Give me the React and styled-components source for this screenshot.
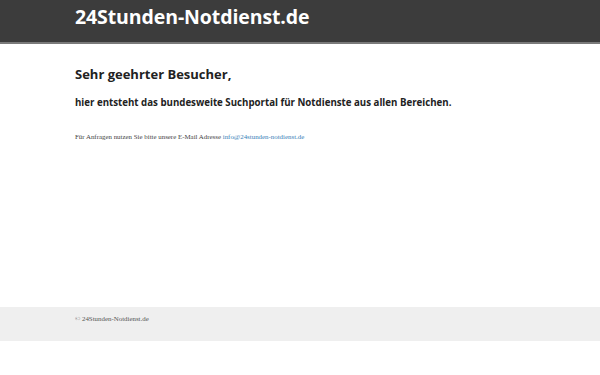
import React from "react";
import styled, { createGlobalStyle } from "styled-components";

const Global = createGlobalStyle`
  html, body { margin: 0; padding: 0; background: #fff; }
  body { font-family: "Open Sans", sans-serif; }
`;

const Header = styled.header`
  background: #3c3c3c;
  height: 42px;
  border-bottom: 2px solid #7a7a7a;
  padding: 0 75px;
  display: flex;
  align-items: center;
`;

const Title = styled.h1`
  margin: 0;
  margin-top: -9px;
  color: #fff;
  font-family: "Open Sans", sans-serif;
  font-weight: 700;
  font-size: 19.5px;
  letter-spacing: -0.1px;
`;

const Main = styled.main`
  padding: 20px 75px 0;
  height: 243px;
`;

const Greeting = styled.h2`
  margin: 0;
  font-size: 13px;
  font-weight: 700;
  color: #222;
  line-height: 20px;
`;

const Lead = styled.p`
  margin: 11px 0 0;
  font-size: 9.7px;
  font-weight: 700;
  color: #222;
  line-height: 16px;
`;

const Note = styled.p`
  margin: 21px 0 0;
  font-family: "Liberation Serif", serif;
  font-size: 6.9px;
  color: #444;
  line-height: 10px;
`;

const Mail = styled.a`
  color: #3a7fb8;
  text-decoration: none;
`;

const Footer = styled.footer`
  background: #efefef;
  height: 34px;
  padding: 0 75px;
  display: flex;
  align-items: flex-start;
  padding-top: 8px;
  box-sizing: border-box;
`;

const FooterText = styled.span`
  font-family: "Liberation Serif", serif;
  font-size: 6.9px;
  color: #555;
`;

export default function App() {
  return (
    <>
      <Global />
      <Header>
        <Title>24Stunden-Notdienst.de</Title>
      </Header>
      <Main>
        <Greeting>Sehr geehrter Besucher,</Greeting>
        <Lead>hier entsteht das bundesweite Suchportal für Notdienste aus allen Bereichen.</Lead>
        <Note>
          Für Anfragen nutzen Sie bitte unsere E-Mail Adresse{" "}
          <Mail href="#">info@24stunden-notdienst.de</Mail>
        </Note>
      </Main>
      <Footer>
        <FooterText>© 24Stunden-Notdienst.de</FooterText>
      </Footer>
    </>
  );
}
